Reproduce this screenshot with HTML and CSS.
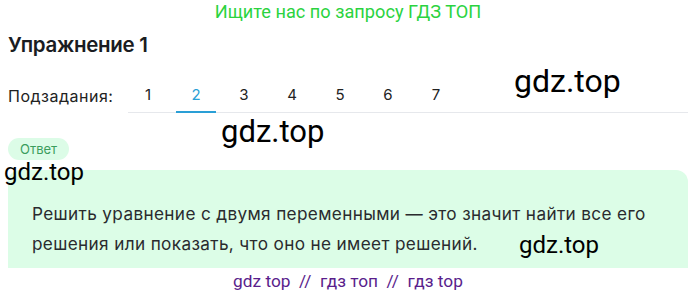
FILE: index.html
```html
<!DOCTYPE html>
<html lang="ru">

<head>
    <meta charset="UTF-8">
    <title>Упражнение 1</title>
    <link rel="stylesheet" href="styles.css">
</head>

<body>
    <div class="promo">Ищите нас по запросу ГДЗ ТОП</div>
    <h1 class="title">Упражнение 1</h1>

    <div class="subtasks">
        <span class="subtasks-label">Подзадания:</span>
        <div class="subtasks-list">
            <a class="subtask">1</a>
            <a class="subtask active">2</a>
            <a class="subtask">3</a>
            <a class="subtask">4</a>
            <a class="subtask">5</a>
            <a class="subtask">6</a>
            <a class="subtask">7</a>
        </div>
    </div>

    <div class="answer-badge">Ответ</div>
    <div class="answer-box">
        <p>Решить уравнение с двумя переменными — это значит найти все его решения или показать, что оно не имеет решений.</p>
    </div>

    <div class="footer-links">gdz top &nbsp;//&nbsp; гдз топ &nbsp;//&nbsp; гдз top</div>

    <!-- watermarks -->
    <div class="wm wm-1">gdz.top</div>
    <div class="wm wm-2">gdz.top</div>
    <div class="wm wm-3">gdz.top</div>
    <div class="wm wm-4">gdz.top</div>
</body>

</html>
```

FILE: styles.css
```css
body {
    margin: 0;
    padding: 0 7px 0 8px;
    font-family: Inter, "Noto Sans", sans-serif;
    background-color: #fff;
    color: #1f2024;
    position: relative;
    height: 298px;
    overflow: hidden;
}

.promo {
    font-family: Roboto, sans-serif;
    font-size: 18.2px;
    color: #2bd33f;
    text-align: center;
    height: 24px;
    line-height: 24px;
}

.title {
    margin: 8px 0 0;
    font-size: 20.5px;
    font-weight: 600;
    line-height: 26px;
    color: #1a1c22;
    letter-spacing: -0.3px;
}

.subtasks {
    display: flex;
    align-items: stretch;
    margin-top: 21px;
}

.subtasks-label {
    font-size: 16px;
    letter-spacing: 0.5px;
    line-height: 34px;
    width: 120px;
    flex-shrink: 0;
    color: #222;
}

.subtasks-list {
    display: flex;
    gap: 8px;
    flex: 1;
    border-bottom: 1px solid #e6e8ec;
    padding-left: 0;
}

.subtask {
    width: 40px;
    text-align: center;
    font-size: 15px;
    line-height: 32px;
    color: #222;
    border-bottom: 2px solid transparent;
    margin-bottom: -1px;
}

.subtask.active {
    color: #2a9fd6;
    border-bottom-color: #2a9fd6;
}

.answer-badge {
    display: inline-block;
    margin-top: 25px;
    padding: 0 12px;
    height: 22px;
    line-height: 22px;
    font-size: 13px;
    color: #3a9d5d;
    background-color: #dcfce7;
    border-radius: 11px;
}

.answer-box {
    margin-top: 10px;
    background-color: #dcfde7;
    border-radius: 12px 12px 0 0;
    padding: 29px 24px 5px;
    height: 64px;
}

.answer-box p {
    margin: 0;
    font-size: 17.2px;
    letter-spacing: 0.35px;
    line-height: 30px;
    color: #2a2b2e;
}

.footer-links {
    font-family: Roboto, sans-serif;
    text-align: center;
    font-size: 17.3px;
    line-height: 26px;
    color: #5a1e8c;
}

.wm {
    position: absolute;
    font-family: Roboto, sans-serif;
    color: #000;
    line-height: 1;
}

.wm-1 {
    left: 514px;
    top: 65px;
    font-size: 32px;
}

.wm-2 {
    left: 221px;
    top: 116px;
    font-size: 31px;
}

.wm-3 {
    left: 4px;
    top: 160px;
    font-size: 24px;
}

.wm-4 {
    left: 519px;
    top: 233px;
    font-size: 24px;
}
```
